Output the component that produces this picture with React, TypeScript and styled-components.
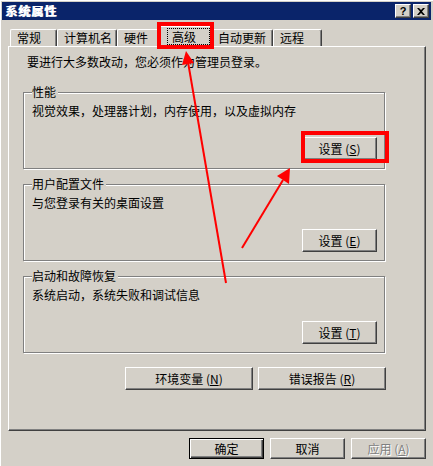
import styled, { createGlobalStyle } from "styled-components";

const GlobalStyle = createGlobalStyle`
  html, body {
    margin: 0;
    padding: 0;
    background: #d4d0c8;
  }
  body {
    font-family: "Noto Sans CJK SC", "Liberation Sans", sans-serif;
    font-size: 12px;
  }
`;

const Window = styled.div`
  position: relative;
  width: 433px;
  height: 466px;
  box-sizing: border-box;
  padding: 2px;
  background: #d4d0c8;
  box-shadow: inset 1px 1px 0 #fff;
  overflow: hidden;
  display: flex;
  flex-direction: column;
`;

const TitleBar = styled.div`
  flex: none;
  height: 18px;
  background: #0a246a;
  display: flex;
  align-items: center;
  gap: 2px;
  padding: 0 2px 0 3px;
`;

const Title = styled.span`
  flex: 1;
  color: #fff;
  font-weight: bold;
  font-size: 12px;
  line-height: 18px;
  text-shadow: 1px 0 0 #fff;
  letter-spacing: 1px;
`;

const CaptionButton = styled.div`
  width: 16px;
  height: 14px;
  box-sizing: border-box;
  background: #d4d0c8;
  border: 1px solid;
  border-color: #fff #404040 #404040 #fff;
  box-shadow: inset -1px -1px 0 #808080;
  display: flex;
  align-items: center;
  justify-content: center;
  font: bold 11px/12px "Liberation Sans", sans-serif;
  color: #000;
`;

const Body = styled.div`
  flex: 1;
  display: flex;
  flex-direction: column;
  padding: 0 5px 0 6px;
`;

const TabStrip = styled.div`
  height: 26px;
  display: flex;
  align-items: flex-end;
  padding-left: 2px;
`;

const Tab = styled.div<{ $w: number; $active?: boolean }>`
  position: relative;
  box-sizing: border-box;
  width: ${(p) => (p.$active ? p.$w + 4 : p.$w)}px;
  height: ${(p) => (p.$active ? 21 : 17)}px;
  margin: ${(p) => (p.$active ? "0 -2px -1px" : "0")};
  z-index: ${(p) => (p.$active ? 2 : 1)};
  padding: ${(p) => (p.$active ? "1px 0 0 8px" : "0 0 0 6px")};
  background: #d4d0c8;
  border-top: 1px solid #fff;
  border-left: 1px solid #fff;
  border-right: 1px solid #404040;
  border-radius: 2px 2px 0 0;
  box-shadow: inset -1px 0 0 #808080;
  line-height: 16px;
  white-space: nowrap;
  color: #000;
`;

const FocusLabel = styled.span`
  display: inline-block;
  border: 1px dotted #000;
  padding: 0 13px 0 4px;
  line-height: 15px;
`;

const Panel = styled.div`
  height: 385px;
  box-sizing: border-box;
  border: 1px solid;
  border-color: #fff #404040 #404040 #fff;
  box-shadow: inset -1px -1px 0 #808080;
  padding: 7px 0 0 14px;
  display: flex;
  flex-direction: column;
  align-items: flex-start;
`;

const Text = styled.div<{ $indent?: number }>`
  line-height: 16px;
  margin-left: ${(p) => p.$indent ?? 0}px;
  color: #000;
  white-space: nowrap;
`;

const GroupBox = styled.fieldset<{ $gap: number }>`
  box-sizing: border-box;
  width: 362px;
  margin: ${(p) => p.$gap}px 0 0;
  padding: 3px 7px 8px 8px;
  border: 1px solid #808080;
  box-shadow: inset 1px 1px 0 #fff, 1px 1px 0 #fff;
`;

const Legend = styled.legend`
  padding: 0 2px 0 0;
  line-height: 16px;
  background: #d4d0c8;
  color: #000;
`;

const ButtonRow = styled.div<{ $gap?: number; $top: number }>`
  display: flex;
  justify-content: flex-end;
  gap: ${(p) => p.$gap ?? 0}px;
  margin-top: ${(p) => p.$top}px;
`;

const ActionRow = styled(ButtonRow)`
  width: 363px;
`;

const Button = styled.button<{ $w?: number; $h?: number; $default?: boolean }>`
  width: ${(p) => p.$w ?? 75}px;
  height: ${(p) => p.$h ?? 23}px;
  box-sizing: border-box;
  padding: 0;
  background: #d4d0c8;
  color: #000;
  font: 12px/14px "Noto Sans CJK SC", "Liberation Sans", sans-serif;
  border: 1px solid;
  border-color: ${(p) => (p.$default ? "#000" : "#fff #404040 #404040 #fff")};
  box-shadow: ${(p) =>
    p.$default
      ? "inset 1px 1px 0 #fff, inset -1px -1px 0 #404040, inset -2px -2px 0 #808080"
      : "inset -1px -1px 0 #808080"};

  u {
    text-decoration: underline;
    text-underline-offset: 1px;
  }

  &:disabled {
    color: #808080;
    text-shadow: 1px 1px 0 #fff;
  }
`;

const Footer = styled(ButtonRow)``;

const Overlay = styled.svg`
  position: absolute;
  left: 0;
  top: 0;
  width: 433px;
  height: 466px;
  pointer-events: none;
  z-index: 10;
`;

const tabs = [
  { label: "常规", w: 47 },
  { label: "计算机名", w: 60 },
  { label: "硬件", w: 43 },
  { label: "高级", w: 51, active: true },
  { label: "自动更新", w: 62 },
  { label: "远程", w: 49 },
];

const groups = [
  { title: "性能", desc: "视觉效果，处理器计划，内存使用，以及虚拟内存", key: "S", gap: 14 },
  { title: "用户配置文件", desc: "与您登录有关的桌面设置", key: "E", gap: 7 },
  { title: "启动和故障恢复", desc: "系统启动，系统失败和调试信息", key: "T", gap: 7 },
];

function Label({ text, hotkey }: { text: string; hotkey?: string }) {
  return (
    <>
      {text}
      {hotkey && (
        <>
          {" ("}
          <u>{hotkey}</u>
          {")"}
        </>
      )}
    </>
  );
}

export default function App() {
  return (
    <>
      <GlobalStyle />
      <Window>
        <TitleBar>
          <Title>系统属性</Title>
          <CaptionButton>?</CaptionButton>
          <CaptionButton>
            <svg width="8" height="7" viewBox="0 0 8 7">
              <path d="M0 0h2l2 2 2-2h2L5 3.5 8 7H6L4 5 2 7H0l3-3.5z" fill="#000" />
            </svg>
          </CaptionButton>
        </TitleBar>
        <Body>
          <TabStrip>
            {tabs.map((t) => (
              <Tab key={t.label} $w={t.w} $active={t.active}>
                {t.active ? <FocusLabel>{t.label}</FocusLabel> : t.label}
              </Tab>
            ))}
          </TabStrip>
          <Panel>
            <Text $indent={4}>要进行大多数改动，您必须作为管理员登录。</Text>
            {groups.map((g) => (
              <GroupBox key={g.key} $gap={g.gap}>
                <Legend>{g.title}</Legend>
                <Text>{g.desc}</Text>
                <ButtonRow $top={18}>
                  <Button>
                    <Label text="设置" hotkey={g.key} />
                  </Button>
                </ButtonRow>
              </GroupBox>
            ))}
            <ActionRow $top={14} $gap={5}>
              <Button $w={128}>
                <Label text="环境变量" hotkey="N" />
              </Button>
              <Button $w={128}>
                <Label text="错误报告" hotkey="R" />
              </Button>
            </ActionRow>
          </Panel>
          <Footer $top={7} $gap={6}>
            <Button $h={21} $default>
              确定
            </Button>
            <Button $h={21}>取消</Button>
            <Button $h={21} disabled>
              <Label text="应用" hotkey="A" />
            </Button>
          </Footer>
        </Body>
        <Overlay viewBox="0 0 433 466">
          <rect x="159" y="24" width="53" height="23" fill="none" stroke="#ff0000" strokeWidth="4" />
          <rect x="303" y="133" width="84" height="28" fill="none" stroke="#ff0000" strokeWidth="4" />
          <line x1="226" y1="283" x2="188" y2="62" stroke="#ff0000" strokeWidth="2" />
          <polygon points="186,51 194,63 182,65" fill="#ff0000" />
          <line x1="242" y1="248" x2="283" y2="180" stroke="#ff0000" strokeWidth="2" />
          <polygon points="290,168 289,184 277,176" fill="#ff0000" />
        </Overlay>
      </Window>
    </>
  );
}
